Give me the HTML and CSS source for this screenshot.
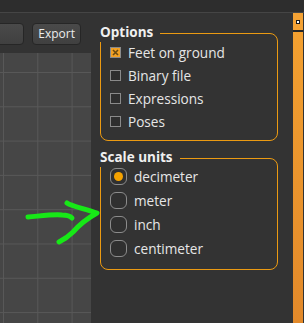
FILE: index.html
```html
<!DOCTYPE html>
<html>
 <head>
  <title>Export options</title>
  <link rel="stylesheet" href="styles.css">
 </head>
 <body>
  <div class="topbar"></div>
  <div class="main">
   <div class="leftPanel">
    <div class="toolbar">
     <button type="button" class="btn wide"></button>
     <button type="button" class="btn">Export</button>
    </div>
    <div class="grid"></div>
   </div>

   <div class="sidePanel">
    <div class="group options">
     <span class="title">Options</span>
     <div class="row">
      <span class="check on">
       <svg width="11" height="11" viewBox="0 0 11 11">
        <rect x="0.5" y="0.5" width="10" height="10" fill="#f2a023" stroke="#8a8a8a"/>
        <path d="M3 3 L8 8 M8 3 L3 8" stroke="#6b4a10" stroke-width="1.6"/>
       </svg>
      </span>
      Feet on ground
     </div>
     <div class="row"><span class="check"></span>Binary file</div>
     <div class="row"><span class="check"></span>Expressions</div>
     <div class="row"><span class="check"></span>Poses</div>
    </div>

    <div class="group units">
     <span class="title">Scale units</span>
     <div class="row"><span class="radio on"></span>decimeter</div>
     <div class="row"><span class="radio"></span>meter</div>
     <div class="row"><span class="radio"></span>inch</div>
     <div class="row"><span class="radio"></span>centimeter</div>
    </div>
   </div>

   <div class="scrollbar">
    <div class="arrow"><span class="knob"></span></div>
    <div class="track"></div>
   </div>
  </div>

  <svg class="scribble" width="304" height="323" viewBox="0 0 304 323">
   <path d="M28 217 C40 216 54 214 62 215 C67 215 70 216 72 218" />
   <path d="M67 203 C71 206 82 208 97 213 C88 218 80 224 73 232 C68 237 63 240 59 242" />
  </svg>
 </body>
</html>
```

FILE: styles.css
```css
body {
 margin:      0;
 width:       304px;
 height:      323px;
 overflow:    hidden;
 background:  #333333;
 color:       #e6e6e6;
 font-family: "Open Sans", "DejaVu Sans", sans-serif;
 font-size:   13.6px;
}

.topbar {
 height:        12px;
 background:    #2d2d2d;
 border-bottom: 1px solid #454545;
}

.main {
 display: flex;
 height:  310px;
}

.leftPanel {
 width:          91px;
 display:        flex;
 flex-direction: column;
 overflow:       hidden;
}

.toolbar {
 height:          40px;
 display:         flex;
 justify-content: flex-end;
 align-items:     flex-start;
 gap:             8px;
 padding:         10px 10px 0 0;
 box-sizing:      border-box;
}

.btn {
 flex:          none;
 height:        22px;
 padding:       0 5px;
 border:        1px solid #262626;
 border-radius: 4px;
 background:    linear-gradient(#4a4a4a, #404040);
 color:         #ececec;
 font-family:   inherit;
 font-size:     12px;
 line-height:   20px;
}

.btn.wide { width: 60px; }

.grid {
 flex:             1;
 background-color: #464646;
 background-image:
  linear-gradient(to right, #585858 1px, transparent 1px),
  linear-gradient(to bottom, #585858 1px, transparent 1px);
 background-size:     34.3px 34.3px;
 background-position: 3px 19px;
}

.sidePanel {
 flex:    1;
 padding: 20px 15px 0 9px;
}

.group {
 position:      relative;
 border:        1px solid #eb9a12;
 border-radius: 8px;
 padding:       7px 9px;
}

.group.units {
 margin-top: 17px;
 padding:    5px 9px 9px;
}

.group .title {
 position:      absolute;
 top:           -10px;
 left:          -1px;
 padding:       0 7px 2px 0;
 background:    #333333;
 font-weight:   bold;
 font-size:     13.5px;
 line-height:   16px;
 color:         #f0f0f0;
}

.row {
 display:     flex;
 align-items: center;
 gap:         7px;
 height:      23px;
}

.units .row { height: 24px; }

.check {
 width:      11px;
 height:     11px;
 box-sizing: border-box;
 border:     1px solid #8a8a8a;
 background: #2e2e2e;
}

.check.on {
 border:  0;
 display: flex;
}

.radio {
 width:         17px;
 height:        17px;
 box-sizing:    border-box;
 border:        1px solid #8c8c8c;
 border-radius: 6px;
 background:    #303030;
 display:       flex;
 align-items:   center;
 justify-content: center;
}

.radio.on::after {
 content:       "";
 width:         9px;
 height:        9px;
 border-radius: 50%;
 background:    #f5a200;
}

.scrollbar {
 width:          10px;
 margin-right:   1px;
 display:        flex;
 flex-direction: column;
 background:     #262626;
}

.arrow {
 height:          17px;
 background:      #f4a234;
 display:         flex;
 align-items:     center;
 justify-content: center;
}

.knob {
 width:      2px;
 height:     2px;
 border:     1px solid #1a1a1a;
 background: #ffffff;
}

.track {
 flex:       1;
 margin-top: 2px;
 background: linear-gradient(#f3a030, #e2892a);
}

.scribble {
 position:       absolute;
 left:           0;
 top:            0;
 pointer-events: none;
}

.scribble path {
 fill:            none;
 stroke:          #17e817;
 stroke-width:    5;
 stroke-linecap:  round;
 stroke-linejoin: round;
}
```
